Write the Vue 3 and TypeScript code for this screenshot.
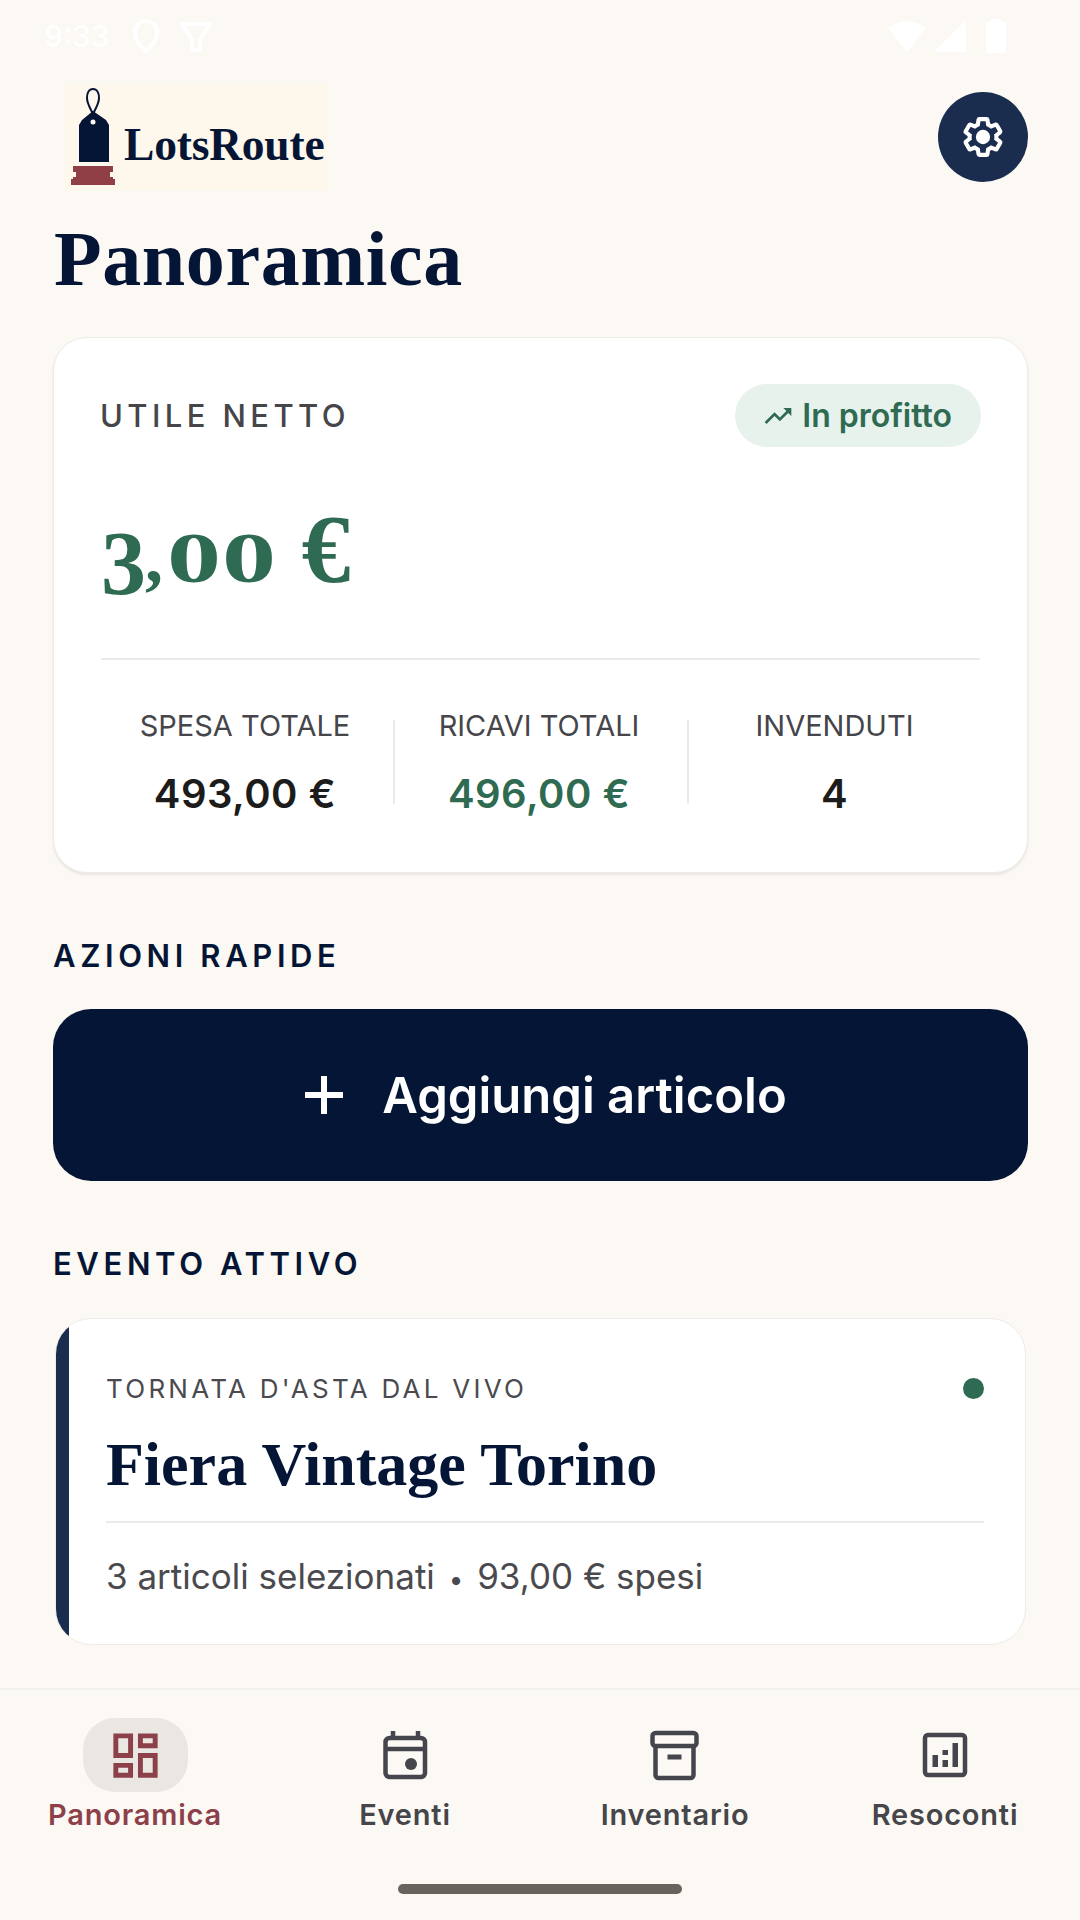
<script setup lang="ts">
const stats = [
  { label: 'SPESA TOTALE', value: '493,00 €', green: false },
  { label: 'RICAVI TOTALI', value: '496,00 €', green: true },
  { label: 'INVENDUTI', value: '4', green: false },
]
const navItems = ['Panoramica', 'Eventi', 'Inventario', 'Resoconti']
</script>

<template>
  <div class="app">
    <div class="status">
      <div class="status-left">
        <span class="clock">9:33</span>
        <svg width="36" height="36" viewBox="0 0 36 36"><path d="M18 3a11 11 0 0 0-11 11c0 8 6 15 11 19 5-4 11-11 11-19A11 11 0 0 0 18 3z" fill="none" stroke="#fff" stroke-width="4"/></svg>
        <svg width="36" height="36" viewBox="0 0 36 36"><path d="M4 6h28L22 22v10h-8V22z" fill="none" stroke="#fff" stroke-width="4"/></svg>
      </div>
      <div class="status-right">
        <svg width="38" height="32" viewBox="0 0 38 32"><path d="M0 8Q19-6 38 8L19 32z" fill="#fff"/></svg>
        <svg width="32" height="32" viewBox="0 0 32 32"><path d="M32 0v32H0z" fill="#fff"/></svg>
        <svg class="batt" width="20" height="34" viewBox="0 0 20 34"><path d="M5 0h10v3h5v31H0V3h5z" fill="#fff"/></svg>
      </div>
    </div>

    <header class="header">
      <div class="logo">
        <svg class="logo-mark" width="46" height="100" viewBox="0 0 46 100">
          <path d="M23 2c-4 0-6 4-6 9 0 5 3 10 5 14h2c2-4 5-9 5-14 0-5-2-9-6-9z" fill="none" stroke="#051535" stroke-width="2"/>
          <path d="M23 24l13 9 3 5v37H9V38l3-5z" fill="#051535"/>
          <circle cx="23" cy="35" r="2.5" fill="#fdf8ef"/>
          <path d="M3 80h40v6h-3v5h3v2H3v-2h3v-5H3z" fill="#8f3f45" transform="translate(0 -1)"/>
          <rect x="1" y="92" width="44" height="6" fill="#8f3f45"/>
        </svg>
        <span class="logo-text">LotsRoute</span>
      </div>
      <button class="settings" type="button" aria-label="Impostazioni">
        <svg width="52" height="52" viewBox="0 0 24 24">
          <path transform="translate(12 12) scale(.86) translate(-12 -12)" d="M19.14 12.94c.04-.3.06-.61.06-.94 0-.32-.02-.64-.07-.94l2.03-1.58c.18-.14.23-.41.12-.61l-1.92-3.32c-.12-.22-.37-.29-.59-.22l-2.39.96c-.5-.38-1.03-.7-1.62-.94l-.36-2.54c-.04-.24-.24-.41-.48-.41h-3.84c-.24 0-.43.17-.47.41l-.36 2.54c-.59.24-1.13.57-1.62.94l-2.39-.96c-.22-.08-.47 0-.59.22L2.74 8.87c-.12.21-.08.47.12.61l2.03 1.58c-.05.3-.09.63-.09.94s.02.64.07.94l-2.03 1.58c-.18.14-.23.41-.12.61l1.92 3.32c.12.22.37.29.59.22l2.39-.96c.5.38 1.03.7 1.62.94l.36 2.54c.05.24.24.41.48.41h3.84c.24 0 .44-.17.47-.41l.36-2.54c.59-.24 1.13-.56 1.62-.94l2.39.96c.22.08.47 0 .59-.22l1.92-3.32c.12-.22.07-.47-.12-.61l-2.01-1.58z" fill="none" stroke="#fff" stroke-width="2.200"/>
          <circle cx="12" cy="12" r="3.300" fill="#fff"/>
        </svg>
      </button>
    </header>

    <h1 class="title">Panoramica</h1>

    <section class="profit-card">
      <div class="profit-head">
        <span class="profit-label">UTILE NETTO</span>
        <span class="pill">
          <svg width="32" height="32" viewBox="0 0 24 24"><path d="M16 6l2.29 2.29-4.88 4.88-4-4L2 16.59 3.41 18l6-6 4 4 6.3-6.29L22 12V6z" fill="#2f6b52"/></svg>
          In profitto
        </span>
      </div>
      <div class="amount"><span class="a-three">3</span><span class="a-comma">,</span><span class="a-zero">0</span><span class="a-zero">0</span><span class="a-euro"> €</span></div>
      <div class="stats">
        <div v-for="s in stats" :key="s.label" class="stat">
          <div class="stat-label">{{ s.label }}</div>
          <div class="stat-value" :class="{ green: s.green }">{{ s.value }}</div>
        </div>
      </div>
    </section>

    <h2 class="section">AZIONI RAPIDE</h2>
    <button class="add" type="button">
      <svg width="40" height="40" viewBox="0 0 40 40"><path d="M17 1h6v16h16v6H23v16h-6V23H1v-6h16z" fill="#fff"/></svg>
      <span>Aggiungi articolo</span>
    </button>

    <h2 class="section">EVENTO ATTIVO</h2>
    <section class="event">
      <div class="event-bar"></div>
      <div class="event-body">
        <div class="event-top">
          <span class="event-kind">TORNATA D'ASTA DAL VIVO</span>
          <span class="dot"></span>
        </div>
        <div class="event-title">Fiera Vintage Torino</div>
        <div class="event-foot">3 articoli selezionati <span class="sep">•</span> 93,00 € spesi</div>
      </div>
    </section>

    <nav class="nav">
      <div class="nav-grid">
        <div v-for="(n, i) in navItems" :key="n" class="nav-item" :class="{ active: i === 0 }">
          <div class="nav-icon">
            <svg v-if="i === 0" width="59" height="59" viewBox="0 0 24 24"><path d="M19 5v2h-4V5h4M9 5v6H5V5h4m10 8v6h-4v-6h4M9 17v2H5v-2h4M21 3h-8v6h8V3zM11 3H3v10h8V3zm10 8h-8v10h8V11zm-10 4H3v6h8v-6z" fill="#8c4049"/></svg>
            <svg v-else-if="i === 1" width="60" height="60" viewBox="0 0 60 60">
              <rect x="10.500" y="13" width="39.500" height="39" rx="4" fill="none" stroke="#45454d" stroke-width="4.500"/>
              <path d="M10 24h40" stroke="#45454d" stroke-width="4.500"/>
              <path d="M18 6v8M43 6v8" stroke="#45454d" stroke-width="4.500"/>
              <circle cx="36" cy="39" r="6" fill="#45454d"/>
            </svg>
            <svg v-else-if="i === 2" width="60" height="60" viewBox="0 0 60 60">
              <rect x="7.500" y="8" width="44" height="13" rx="3" fill="none" stroke="#45454d" stroke-width="4.500"/>
              <path d="M10.500 20v30a3 3 0 0 0 3 3h32a3 3 0 0 0 3-3V20" fill="none" stroke="#45454d" stroke-width="4.500"/>
              <path d="M22.500 32h14" stroke="#45454d" stroke-width="5"/>
            </svg>
            <svg v-else width="60" height="60" viewBox="0 0 60 60">
              <rect x="10" y="10" width="40" height="40" rx="3" fill="none" stroke="#45454d" stroke-width="4.500"/>
              <path d="M17.500 30h5.500v12h-5.500zM27.500 25h5.500v5h-5.500zM27.500 35h5.500v7h-5.500zM37.500 18h5.500v24h-5.500z" fill="#45454d"/>
            </svg>
          </div>
          <span class="nav-label">{{ n }}</span>
        </div>
      </div>
      <div class="home"></div>
    </nav>
  </div>
</template>

<style scoped>
.app {
  width: 1080px;
  height: 1920px;
  display: flex;
  flex-direction: column;
  overflow: hidden;
  background: #fcf9f4;
  font-family: Inter, "Noto Sans", sans-serif;
  color: #1c1c1c;
}
.status {
  height: 60px;
  padding: 12px 74px 0 44px;
  box-sizing: border-box;
  display: flex;
  justify-content: space-between;
  align-items: center;
  color: #fff;
  flex: none;
}
.status-left, .status-right { display: flex; align-items: center; }
.status-left { gap: 14px; }
.status-right { gap: 8px; }
.batt { margin-left: 12px; }
.clock { font-size: 30px; font-weight: 500; width: 70px; }
.header {
  margin-top: 25px;
  padding: 0 52px 0 65px;
  height: 105px;
  display: flex;
  justify-content: space-between;
  align-items: flex-start;
  flex: none;
}
.logo {
  width: 263px;
  height: 105px;
  background: #fdf7ec;
  display: flex;
  align-items: flex-start;
  box-sizing: border-box;
  padding-left: 5px;
}
.logo-mark { margin-top: 2px; flex: none; }
.logo-text {
  margin-left: 8px;
  margin-top: 32px;
  font-family: "Liberation Serif", serif;
  font-weight: 700;
  font-size: 45.5px;
  line-height: 56px;
  color: #051535;
  letter-spacing: -0.2px;
}
.settings {
  width: 90px;
  height: 90px;
  margin-top: 7px;
  border: 0;
  padding: 0;
  border-radius: 50%;
  background: #1b2d4f;
  display: flex;
  align-items: center;
  justify-content: center;
}
.title {
  margin: 24px 0 0 54px;
  height: 90px;
  font-family: "Liberation Serif", serif;
  font-weight: 700;
  font-size: 78px;
  line-height: 90px;
  color: #051535;
  letter-spacing: 0.6px;
  flex: none;
}
.profit-card {
  margin: 33px 52px 0 53px;
  height: 536px;
  box-sizing: border-box;
  padding: 46px 47px 0;
  background: #fff;
  border: 1px solid #eeece8;
  border-radius: 34px;
  box-shadow: 0 2px 3px rgba(0, 0, 0, 0.08);
  flex: none;
}
.profit-head {
  display: flex;
  justify-content: space-between;
  align-items: center;
}
.profit-label {
  margin-left: -1px;
  font-size: 31px;
  font-weight: 500;
  letter-spacing: 4.4px;
  color: #45454a;
}
.pill {
  height: 63px;
  margin-right: -1px;
  padding: 0 29px 0 27px;
  border-radius: 32px;
  background: #e8f2ec;
  color: #2f6b52;
  font-size: 32px;
  font-weight: 600;
  display: flex;
  align-items: center;
  gap: 8px;
}
.amount {
  height: 213px;
  box-sizing: border-box;
  padding-top: 52px;
  border-bottom: 2px solid #eceae6;
  font-family: "Liberation Serif", serif;
  font-weight: 700;
  color: #2f6b52;
  line-height: 100px;
  white-space: nowrap;
  font-size: 72px;
}
.a-three { display: inline-block; width: 44px; font-size: 90px; transform: translateY(12px); }
.a-comma { display: inline-block; width: 22px; }
.a-zero {
  display: inline-block;
  width: 55px;
  transform: scaleX(1.5);
  transform-origin: left center;
}
.a-euro { font-size: 98px; }
.stats {
  display: grid;
  grid-template-columns: 292px 294px 1fr;
  margin-top: 60px;
}
.stat {
  height: 84px;
  box-sizing: border-box;
  text-align: center;
}
.stat:nth-child(-n + 2) { padding-right: 4px; }
.stat + .stat { border-left: 2px solid #eceae6; }
.stat-label {
  margin-top: -12px;
  font-size: 29px;
  line-height: 36px;
  color: #45454a;
}
.stat-value {
  margin-top: 27px;
  font-size: 40px;
  line-height: 46px;
  font-weight: 600;
  letter-spacing: 0.5px;
  color: #1c1c1c;
}
.stat-value.green { color: #2f6b52; }
.section {
  margin: 65px 0 0 53px;
  height: 36px;
  font-size: 31px;
  line-height: 36px;
  font-weight: 600;
  letter-spacing: 4.6px;
  color: #051535;
  flex: none;
}
.add {
  margin: 35px 52px 0 53px;
  height: 172px;
  border: 0;
  padding: 0 0 0 10px;
  border-radius: 38px;
  background: #051535;
  color: #fff;
  font-family: inherit;
  font-size: 49px;
  font-weight: 600;
  display: flex;
  align-items: center;
  justify-content: center;
  gap: 38px;
  flex: none;
}
.event {
  margin: 36px 54px 0 55px;
  height: 327px;
  box-sizing: border-box;
  display: flex;
  overflow: hidden;
  background: #fff;
  border: 1px solid #eeece8;
  border-radius: 36px;
  flex: none;
}
.event-bar { width: 13px; background: #1b2d4f; flex: none; }
.event-body {
  flex: 1;
  padding: 0 41px 0 37px;
  box-sizing: border-box;
}
.event-top {
  height: 34px;
  margin-top: 52px;
  display: flex;
  align-items: center;
  justify-content: space-between;
}
.event-kind {
  font-size: 26px;
  letter-spacing: 3.25px;
  color: #4a4a4e;
}
.dot {
  width: 21px;
  height: 21px;
  border-radius: 50%;
  background: #2f6b52;
}
.event-title {
  height: 93px;
  margin-top: 23px;
  border-bottom: 2px solid #eceae6;
  font-family: "Liberation Serif", serif;
  font-weight: 700;
  font-size: 62px;
  line-height: 72px;
  color: #051535;
}
.event-foot {
  margin-top: 33px;
  font-size: 35px;
  line-height: 40px;
  color: #4a4a4e;
}
.sep { margin: 0 4px; font-size: 26px; }
.nav {
  margin-top: auto;
  height: 232px;
  box-sizing: border-box;
  border-top: 2px solid #f3f1ec;
  padding-top: 28px;
  display: flex;
  flex-direction: column;
  flex: none;
}
.nav-grid { display: grid; grid-template-columns: repeat(4, 1fr); }
.nav-item {
  display: flex;
  flex-direction: column;
  align-items: center;
  color: #45454a;
}
.nav-icon {
  width: 105px;
  height: 74px;
  border-radius: 32px;
  display: flex;
  align-items: center;
  justify-content: center;
}
.active .nav-icon { background: #eae7e2; }
.active { color: #8c4049; }
.nav-label {
  margin-top: 5px;
  font-size: 29px;
  line-height: 36px;
  font-weight: 600;
  letter-spacing: 0.8px;
}
.home {
  width: 284px;
  height: 10px;
  margin: auto auto 26px;
  border-radius: 5px;
  background: #67645e;
}
</style>

<style>
html, body { margin: 0; background: #fcf9f4; }
</style>
